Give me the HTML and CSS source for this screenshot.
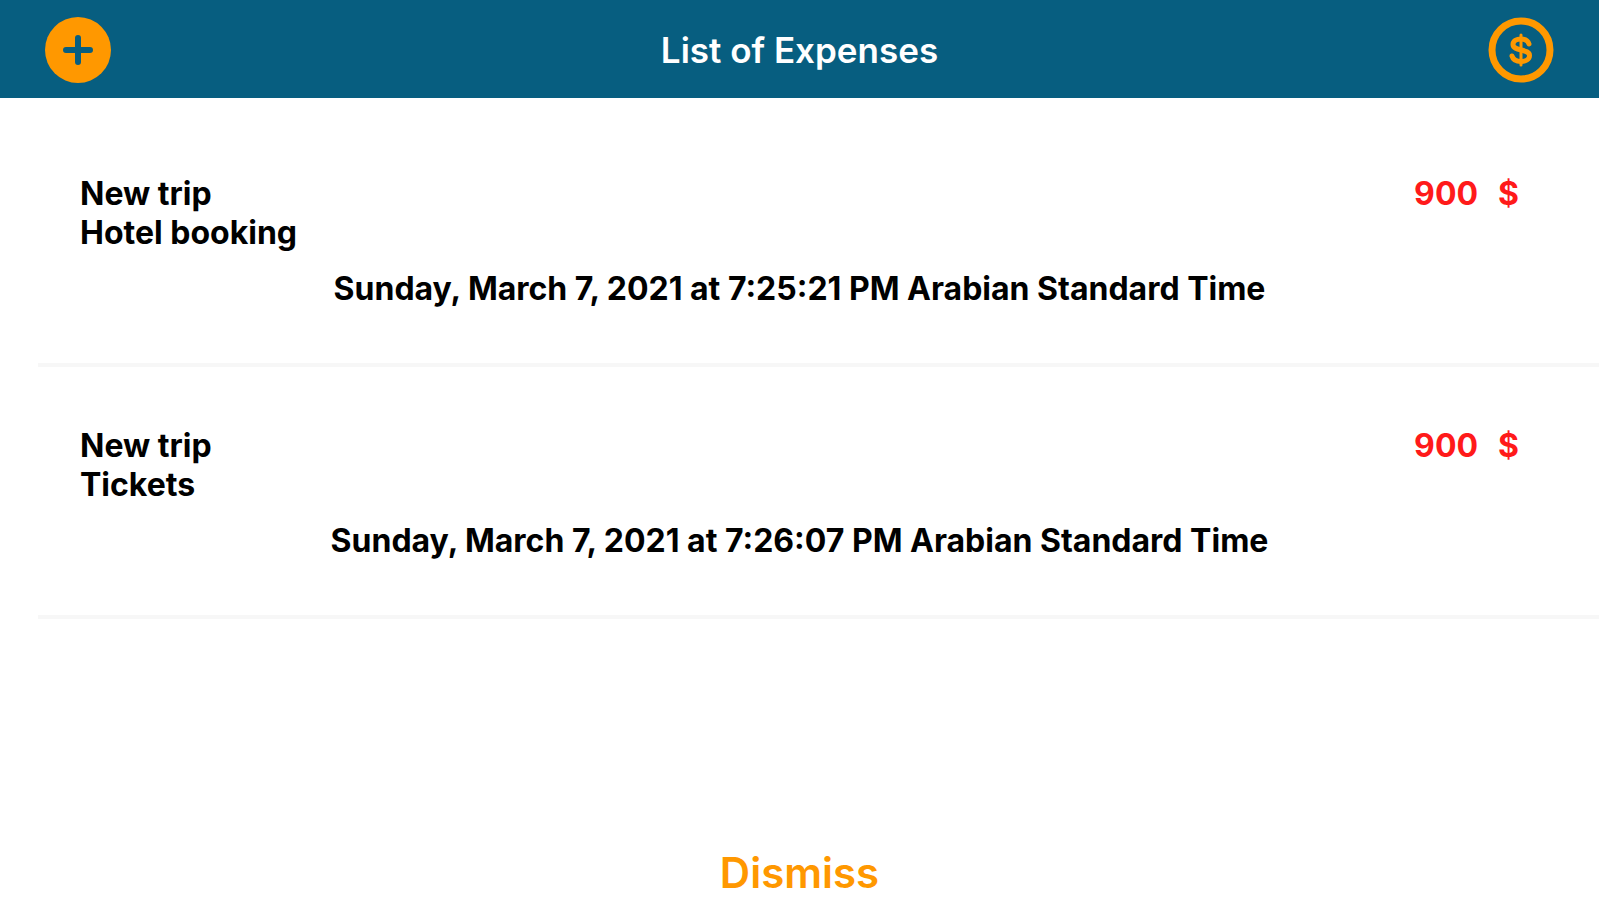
FILE: index.html
```
<!DOCTYPE html>
<html lang="en">
<head>
    <meta charset="UTF-8">
    <meta name="viewport" content="width=device-width, initial-scale=1.0">
    <title>List of Expenses</title>
    <link rel="stylesheet" href="styles.css">
</head>
<body>
    <header class="navbar">
        <button class="icon-button" type="button" aria-label="Add expense">
            <svg viewBox="0 0 66 66">
                <circle cx="33" cy="33" r="33" fill="#ff9800"/>
                <path d="M33 21v24M21 33h24" stroke="#075e80" stroke-width="6" stroke-linecap="round"/>
            </svg>
        </button>
        <h1>List of Expenses</h1>
        <button class="icon-button" type="button" aria-label="Currency">
            <svg viewBox="0 0 66 66" fill="none" stroke="#ff9800" stroke-linecap="round">
                <circle cx="33" cy="33" r="29" stroke-width="7"/>
                <path d="M41 27c-1-3-4-5-8-5-4.500 0-8 2-8 5.500 0 7 16.500 4 16.500 11 0 4-4 6-8.500 6s-8-2-9-5.500" stroke-width="5"/>
                <path d="M33 18v30" stroke-width="3"/>
            </svg>
        </button>
    </header>
    <main>
        <ul class="expenses">
            <li class="expense">
                <div class="row">
                    <div class="title">New trip<br>Hotel booking</div>
                    <div class="amount"><span>900</span><span>$</span></div>
                </div>
                <time class="date">Sunday, March 7, 2021 at 7:25:21 PM Arabian Standard Time</time>
            </li>
            <li class="expense">
                <div class="row">
                    <div class="title">New trip<br>Tickets</div>
                    <div class="amount"><span>900</span><span>$</span></div>
                </div>
                <time class="date">Sunday, March 7, 2021 at 7:26:07 PM Arabian Standard Time</time>
            </li>
        </ul>
    </main>
    <footer>
        <button class="dismiss" type="button">Dismiss</button>
    </footer>
</body>
</html>
```
FILE: styles.css
```
* {
    box-sizing: border-box;
}
body {
    display: flex;
    flex-direction: column;
    min-height: 100vh;
    margin: 0;
    background-color: #fff;
    color: #000;
    font-family: Inter, sans-serif;
}
button {
    padding: 0;
    border: none;
    background: none;
    font-family: inherit;
    cursor: pointer;
}
.navbar {
    display: flex;
    justify-content: space-between;
    align-items: center;
    height: 98px;
    padding: 2px 45px 0;
    background-color: #075e80;
}
.navbar h1 {
    margin: 0;
    color: #fff;
    font-size: 35px;
    font-weight: 600;
}
.icon-button {
    width: 66px;
    height: 66px;
}
.icon-button svg {
    display: block;
}
main {
    flex: 1;
}
.expenses {
    margin: 17px 0 0;
    padding: 0 0 0 38px;
    list-style: none;
}
.expense {
    padding: 59px 80px 55px 42px;
    border-bottom: 4px solid #f7f7f7;
}
.row {
    display: flex;
    justify-content: space-between;
}
.title, .amount, .date {
    font-size: 32px;
    font-weight: 700;
    line-height: 39px;
}
.amount {
    display: flex;
    gap: 20px;
    color: #ff1a1a;
}
.date {
    display: block;
    margin-top: 17px;
    text-align: center;
}
footer {
    padding-bottom: 2px;
    text-align: center;
}
.dismiss {
    color: #ff9800;
    font-size: 42px;
    font-weight: 600;
    line-height: 50px;
}
```
